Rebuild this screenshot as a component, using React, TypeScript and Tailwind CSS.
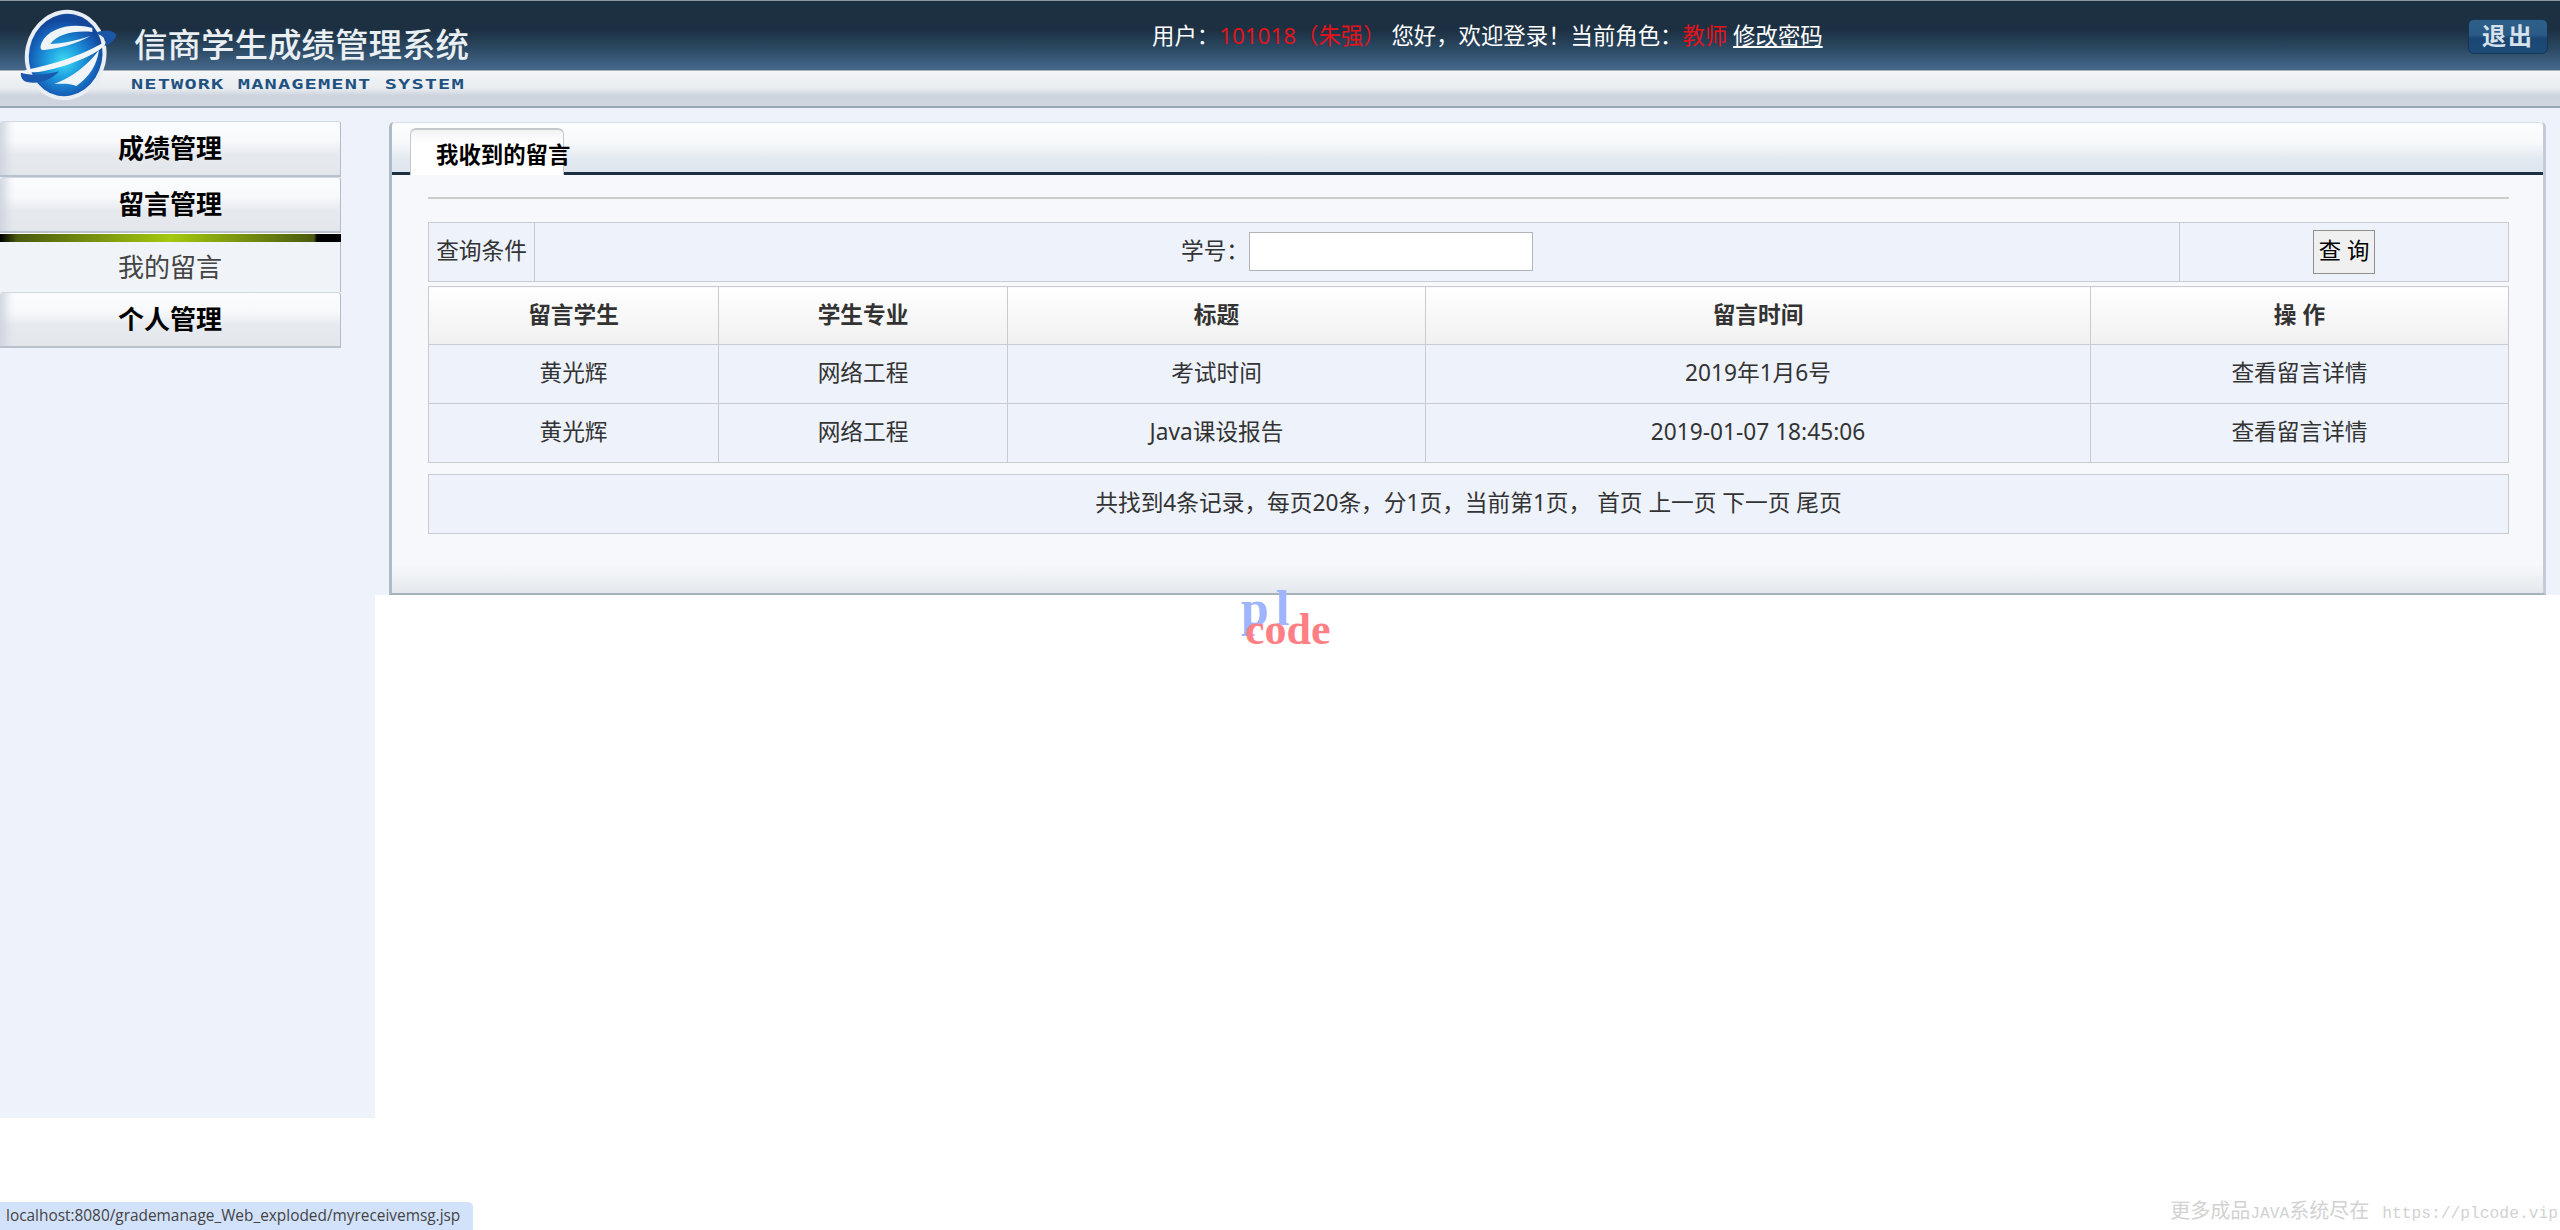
const cjk = '"Noto Sans", "Noto Sans CJK SC", sans-serif'

const Logo = () => (
  <svg viewBox="0 0 330 315" className="h-[105px] w-[110px]">
    <defs>
      <radialGradient id="ball" gradientUnits="userSpaceOnUse" cx="150" cy="185" r="125">
        <stop offset="0" stopColor="#3fdcf2" />
        <stop offset="0.4" stopColor="#1e9ee0" />
        <stop offset="0.8" stopColor="#1560b8" />
        <stop offset="1" stopColor="#12479a" />
      </radialGradient>
    </defs>
    <ellipse cx="152" cy="165" rx="122" ry="136" transform="rotate(12 152 165)" fill="#e9eef4" />
    <ellipse cx="152" cy="165" rx="110" ry="124" transform="rotate(12 152 165)" fill="url(#ball)" />
    {/* upper white swoosh */}
    <path d="M232 84 C170 66 100 84 80 128 C74 142 76 152 88 150 C130 146 185 132 226 108 C190 120 140 132 106 132 C124 104 178 90 232 96Z" fill="#eef4f8" />
    {/* middle band */}
    <path d="M28 212 C90 196 190 178 292 112 C262 160 170 196 84 214 C64 218 44 218 28 212Z" fill="#f1f6fa" />
    {/* lower white stripes */}
    <path d="M118 252 C170 232 214 200 252 150 C246 196 222 232 184 258 C168 250 140 250 118 252Z" fill="#eef4f8" />
    {/* blue wings */}
    <path d="M240 100 C262 88 292 88 304 104 C300 122 286 132 268 138 C278 122 268 108 240 100Z" fill="#1a55a6" />
    <path d="M18 218 C50 228 90 226 132 214 C110 240 70 254 36 246 C22 242 16 230 18 218Z" fill="#1a58ad" />
  </svg>
)

const SideButton = ({ label }: { label: string }) => (
  <div className="flex h-14 w-[341px] items-center justify-center rounded-t-[3px] border-t border-r border-b-2 border-t-[#d3d9e2] border-r-[#b4bcc8] border-b-[#b9c1cc] bg-[linear-gradient(to_bottom,#fbfcfd_0%,#f8f9fb_35%,#e6e9ee_62%,#e3e7ec_100%)] text-[26px] font-bold text-black shadow-[inset_14px_0_10px_-8px_#cfd5df]">
    {label}
  </div>
)

const Cell = ({ children, className = '' }: { children: React.ReactNode; className?: string }) => (
  <td className={`border border-[#c8ccd2] pb-px text-center ${className}`}>{children}</td>
)

const HeadCell = ({ children, className = '' }: { children: React.ReactNode; className?: string }) => (
  <th className={`border border-[#c8ccd2] bg-[linear-gradient(to_bottom,#ffffff,#f0f0f0)] text-center font-bold text-[#333] ${className}`}>
    {children}
  </th>
)

const rows = [
  { student: '黄光辉', major: '网络工程', title: '考试时间', time: '2019年1月6号' },
  { student: '黄光辉', major: '网络工程', title: 'Java课设报告', time: '2019-01-07 18:45:06' },
]

const App = () => {
  return (
    <div className="relative h-[1230px] w-full overflow-hidden bg-white" style={{ fontFamily: cjk }}>
      <header className="relative h-[108px]">
        <div className="flex h-[71px] items-start border-t border-t-[#8a97a3] border-b border-b-[#a7afb9] bg-[linear-gradient(to_bottom,#1c3042_0%,#1c3042_42%,#2c4a64_70%,#46698c_100%)]">
          <div className="w-[1152px] shrink-0" />
          <div className="mt-5 flex-1 whitespace-nowrap text-[22.4px] leading-[30px] text-white">
            用户：<span className="text-[#e3131b]">101018（朱强）</span> 您好，欢迎登录！当前角色：<span className="text-[#e3131b]">教师</span>{' '}
            <a className="underline">修改密码</a>
          </div>
          <button className="mt-[18px] mr-3 flex h-[35px] w-20 items-center justify-center rounded-[6px] border border-[#173553] bg-[linear-gradient(to_bottom,#2d6089_0%,#2a5a85_45%,#1c4774_55%,#1d4a78_100%)] pb-[2px] text-[24px] font-bold leading-none tracking-[2px] text-[#d5e2ec]">
            退出
          </button>
        </div>
        <div className="h-[37px] border-b-2 border-b-[#9aa6b2] bg-[linear-gradient(to_bottom,#f3f5f7_0%,#e9ecf0_50%,#cdd4de_70%,#cfd6df_100%)]" />
        <div className="absolute top-0 left-[15px]">
          <Logo />
        </div>
        <div className="absolute top-[22px] left-[134px] whitespace-nowrap text-[33.5px] leading-[44px] font-medium text-[#e9eff3]">
          信商学生成绩管理系统
        </div>
        <div
          className="absolute top-[75px] left-[131px] origin-left scale-x-[1.45] whitespace-nowrap text-[14px] leading-[18px] font-bold tracking-[0.78px] text-[#1f5281]"
          style={{ fontFamily: '"DejaVu Sans Mono", monospace' }}
        >
          NETWORK MANAGEMENT SYSTEM
        </div>
      </header>

      <div className="flex items-start">
        <aside className="h-[1010px] w-[375px] shrink-0 bg-[#edf2fb] pt-[13px]">
          <SideButton label="成绩管理" />
          <SideButton label="留言管理" />
          <div className="h-[9px] w-[341px] border-t border-t-white bg-[linear-gradient(to_right,#000_0%,#4a5a10_5%,#a4c90f_50%,#4a5a10_92%,#000_93%,#000_100%)]" />
          <div className="flex h-[50px] w-[341px] items-center justify-center border-r border-r-[#b4bcc8] bg-[#f0f3f8] text-[26px] text-[#444]">
            我的留言
          </div>
          <SideButton label="个人管理" />
        </aside>

        <main className="h-[487px] flex-1 bg-[#edf2fb] pt-[14px] pr-[14px] pl-[14px] text-[22.7px] text-[#333]">
          <div className="h-[473px] rounded-t-[5px] border-r-[3px] border-b-2 border-l-[3px] border-r-[#c3ccd8] border-b-[#a5b1bd] border-l-[#aebbc8] bg-[linear-gradient(to_bottom,#f7f8fb_0%,#f7f8fb_94%,#e4e8ec_100%)]">
            <div className="relative h-[53px] rounded-t-[5px] border-t border-b-[3px] border-t-[#d9dee6] border-b-[#1c3042] bg-[linear-gradient(to_bottom,#fcfdfe_0%,#f7f9fb_40%,#e2e8ef_75%,#dfe6ee_100%)]">
              <div className="absolute top-[5px] left-[18px] h-[47px] w-[154px] rounded-t-[6px] border-t-2 border-r border-l border-t-[#c5c8cc] border-r-[#c5c8cc] border-l-[#c5c8cc] bg-[linear-gradient(to_bottom,#f2f3f5,#ffffff_30%)] pt-[10px] pl-[25px] text-[22.4px] leading-[30px] font-bold whitespace-nowrap text-black">
                我收到的留言
              </div>
            </div>
            <div className="pt-[22px] pr-[34px] pl-9">
              <div className="h-0.5 bg-[#cccccc]" />
              <table className="mt-[23px] h-[60px] w-full table-fixed border-collapse bg-[#edf2fb]">
                <tbody>
                  <tr>
                    <Cell className="w-[106px] whitespace-nowrap">查询条件</Cell>
                    <Cell>
                      <div className="flex items-center justify-center">
                        <span>学号：</span>
                        <input className="h-[39px] w-[284px] border border-[#b0b4ba] bg-white" />
                      </div>
                    </Cell>
                    <Cell className="w-[329px]">
                      <button className="h-11 w-[62px] border border-[#8f8f8f] bg-[#f0f0f0] pb-px text-[22.4px] leading-none text-black">
                        查 询
                      </button>
                    </Cell>
                  </tr>
                </tbody>
              </table>
              <table className="mt-1 w-full table-fixed border-collapse bg-[#edf2fb]">
                <tbody>
                  <tr className="h-[58px]">
                    <HeadCell className="w-[290px]">留言学生</HeadCell>
                    <HeadCell className="w-[289px]">学生专业</HeadCell>
                    <HeadCell className="w-[418px]">标题</HeadCell>
                    <HeadCell className="w-[665px]">留言时间</HeadCell>
                    <HeadCell>操 作</HeadCell>
                  </tr>
                  {rows.map((row) => {
                    return (
                      <tr key={row.title} className="h-[59px]">
                        <Cell>{row.student}</Cell>
                        <Cell>{row.major}</Cell>
                        <Cell>{row.title}</Cell>
                        <Cell>{row.time}</Cell>
                        <Cell>查看留言详情</Cell>
                      </tr>
                    )
                  })}
                </tbody>
              </table>
              <table className="mt-[11px] h-[60px] w-full border-collapse bg-[#edf2fb]">
                <tbody>
                  <tr>
                    <Cell>共找到4条记录，每页20条，分1页，当前第1页， 首页 上一页 下一页 尾页</Cell>
                  </tr>
                </tbody>
              </table>
            </div>
          </div>
        </main>
      </div>

      <div
        className="absolute top-[578px] left-[1241px] text-[50px] leading-[60px] font-bold tracking-[7px] text-[#9fb5ff]"
        style={{ fontFamily: '"Liberation Serif", serif' }}
      >
        pl
      </div>
      <div
        className="absolute top-[605px] left-[1245px] text-[44px] leading-[50px] font-bold text-[#ff7f85]"
        style={{ fontFamily: '"Liberation Serif", serif' }}
      >
        code
      </div>

      <div className="absolute bottom-0 left-0 flex h-7 w-[473px] items-center rounded-tr-[5px] bg-[#d3e2fb] pl-[6px] text-[15.4px] whitespace-nowrap text-[#444]" style={{ fontFamily: '"Open Sans", sans-serif' }}>
        localhost:8080/grademanage_Web_exploded/myreceivemsg.jsp
      </div>

      <div className="absolute right-[2px] bottom-[8px] flex items-baseline whitespace-nowrap text-[#d2d2d2]">
        <span className="text-[20px] leading-none">更多成品</span>
        <span className="text-[16.3px] leading-none" style={{ fontFamily: '"Liberation Mono", monospace' }}>JAVA</span>
        <span className="text-[20px] leading-none">系统尽在</span>
        <span className="ml-[3px] text-[16.3px] leading-none whitespace-pre" style={{ fontFamily: '"Liberation Mono", monospace' }}> https://plcode.vip</span>
      </div>
    </div>
  )
}

export default App
